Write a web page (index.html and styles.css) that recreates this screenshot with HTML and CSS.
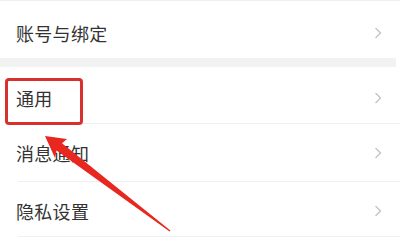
FILE: index.html
```html
<!DOCTYPE html>
<html lang="zh-CN">

<head>
    <meta charset="UTF-8">
    <meta name="viewport" content="width=device-width, initial-scale=1.0">
    <title>设置</title>
    <link rel="stylesheet" href="styles.css">
</head>

<body>
    <div class="page">

        <!-- ----------- account ---------------- -->
        <div class="row row-top">
            <span class="label">账号与绑定</span>
            <svg class="chev" width="8" height="12" viewBox="0 0 8 12"><polyline points="1.5,1 6.5,6 1.5,11" /></svg>
        </div>

        <div class="gap"></div>

        <!-- ----------- general ---------------- -->
        <div class="row row-a line">
            <span class="label">通用</span>
            <svg class="chev" width="8" height="12" viewBox="0 0 8 12"><polyline points="1.5,1 6.5,6 1.5,11" /></svg>
        </div>

        <div class="row row-b line">
            <span class="label">消息通知</span>
            <svg class="chev" width="8" height="12" viewBox="0 0 8 12"><polyline points="1.5,1 6.5,6 1.5,11" /></svg>
        </div>

        <div class="row row-c line">
            <span class="label">隐私设置</span>
            <svg class="chev" width="8" height="12" viewBox="0 0 8 12"><polyline points="1.5,1 6.5,6 1.5,11" /></svg>
        </div>

        <!-- ----------- annotation ---------------- -->
        <div class="mark"></div>
        <svg class="arrow" width="400" height="242" viewBox="0 0 400 242">
            <polygon points="45,135 67,138 62,142.3 170.4,229.4 169.6,230.6 56.6,149.5 55,157" />
        </svg>

    </div>
</body>

</html>
```

FILE: styles.css
```css
* {
    box-sizing: border-box;
    padding: 0;
    margin: 0;
}

body {
    background: #ffffff;
    font-family: "Noto Sans CJK SC", "Noto Sans", sans-serif;
    color: #333333;
}

.page {
    position: relative;
    width: 400px;
    height: 242px;
    overflow: hidden;
    border-top: 1px solid #f0f0f0;
}

.row {
    display: flex;
    align-items: center;
    justify-content: space-between;
    padding: 0 18px 0 16px;
}

.row-top {
    height: 57px;
    padding-top: 7px;
}

.row-a {
    height: 57px;
    padding-top: 4px;
}

.row-b {
    height: 58px;
}

.row-c {
    height: 55px;
    padding-top: 2px;
}

.line {
    position: relative;
}

.line::after {
    content: "";
    position: absolute;
    left: 18px;
    right: 0;
    bottom: 0;
    height: 1px;
    background: #f0f0f0;
}

.label {
    font-size: 18px;
    line-height: 24px;
    letter-spacing: 0.3px;
}

.chev polyline {
    fill: none;
    stroke: #c4c4c4;
    stroke-width: 1.4;
}

.gap {
    height: 9px;
    margin-right: 4px;
    background: #f2f2f2;
}

.mark {
    position: absolute;
    left: 5px;
    top: 77px;
    width: 78px;
    height: 47px;
    border: 3px solid #d8302c;
    border-radius: 4px;
}

.arrow {
    position: absolute;
    left: 0;
    top: 0;
}

.arrow polygon {
    fill: #e8271f;
}
```
